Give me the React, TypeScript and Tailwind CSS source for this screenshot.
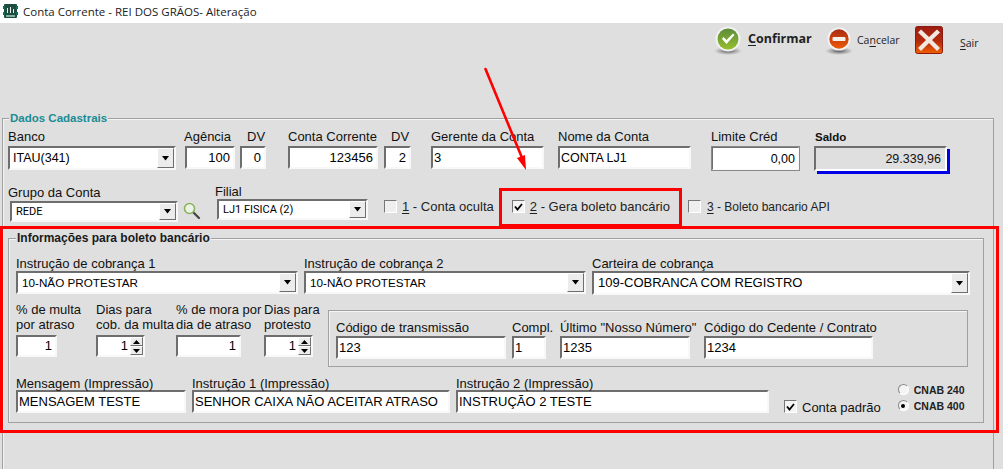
import React from "react";

const sunken = "border-2 border-t-[#6e6e6e] border-l-[#6e6e6e] border-r-[#f8f8f8] border-b-[#f8f8f8] bg-white";

function Box({ className = "", right, text, fs = "text-[13px]" }: { className?: string; right?: boolean; text: string; fs?: string }) {
  return (
    <div className={`${sunken} ${fs} flex items-center overflow-hidden whitespace-nowrap text-black ${right ? "justify-end pr-[3px]" : "pl-[1px]"} ${className}`}>
      {text}
    </div>
  );
}

function Arrow() {
  return (
    <span className="flex h-full w-[17px] shrink-0 items-center justify-center border border-t-white border-l-white border-r-[#6e6e6e] border-b-[#6e6e6e] bg-[#ececec]">
      <svg width="9" height="5" viewBox="0 0 9 5"><path d="M1 0h7L4.5 4.5z" fill="#000" /></svg>
    </span>
  );
}

function Combo({ className = "", text, fs = "text-[13px]", pad = "pl-[3px]" }: { className?: string; text: string; fs?: string; pad?: string }) {
  return (
    <div className={`${sunken} flex overflow-hidden ${className}`}>
      <span className={`flex flex-1 items-center whitespace-nowrap text-black ${fs} ${pad}`}>{text}</span>
      <Arrow />
    </div>
  );
}

function Spin({ className = "", text }: { className?: string; text: string }) {
  return (
    <div className={`${sunken} flex text-[13px] text-black ${className}`}>
      <span className="flex flex-1 items-center justify-end pr-[2px]">{text}</span>
      <span className="flex w-[13px] flex-col">
        {[0, 1].map((i) => (
          <span key={i} className="flex flex-1 items-center justify-center border border-t-white border-l-white border-r-[#6e6e6e] border-b-[#6e6e6e] bg-[#ececec]">
            <svg width="7" height="4" viewBox="0 0 7 4"><path d={i === 0 ? "M3.5 0L7 4H0z" : "M0 0h7L3.5 4z"} fill="#000" /></svg>
          </span>
        ))}
      </span>
    </div>
  );
}

function Check({ on, className = "" }: { on?: boolean; className?: string }) {
  return (
    <span className={`flex h-[13px] w-[13px] shrink-0 items-center justify-center border border-t-[#777] border-l-[#777] border-r-white border-b-white ${on ? "bg-[#f4f4f4]" : "bg-[#efefef]"} ${className}`}>
      {on && <svg width="9" height="8" viewBox="0 0 9 8"><path d="M1 3.5L3.5 6.5L8 1" fill="none" stroke="#000" strokeWidth="1.8" /></svg>}
    </span>
  );
}

function ConfirmIcon() {
  return (
    <svg width="28" height="30" viewBox="0 0 28 30">
      <defs>
        <linearGradient id="g1" x1="0" y1="0" x2="0" y2="1"><stop offset="0" stopColor="#5d8a3a" /><stop offset="1" stopColor="#96c02f" /></linearGradient>
        <radialGradient id="s1"><stop offset="0" stopColor="#555" /><stop offset="1" stopColor="#777" stopOpacity="0" /></radialGradient>
      </defs>
      <ellipse cx="14" cy="25" rx="14" ry="4" fill="url(#s1)" />
      <circle cx="14" cy="13" r="12.5" fill="#f2f2f2" />
      <circle cx="14" cy="13" r="10.5" fill="url(#g1)" />
      <path d="M8 13l4.5 5 8-9-1.5-1.5-6.5 6.5-3-3z" fill="#fff" />
    </svg>
  );
}

function CancelIcon() {
  return (
    <svg width="28" height="30" viewBox="0 0 28 30">
      <defs>
        <linearGradient id="g2" x1="0" y1="0" x2="0" y2="1"><stop offset="0" stopColor="#a82a12" /><stop offset="1" stopColor="#ef5a05" /></linearGradient>
        <radialGradient id="s2"><stop offset="0" stopColor="#555" /><stop offset="1" stopColor="#777" stopOpacity="0" /></radialGradient>
      </defs>
      <ellipse cx="14" cy="25" rx="14" ry="4" fill="url(#s2)" />
      <circle cx="14" cy="13" r="11.5" fill="#f2f2f2" />
      <circle cx="14" cy="13" r="9.7" fill="url(#g2)" />
      <rect x="7.5" y="11" width="13" height="4" rx="1" fill="#f4f0ec" />
    </svg>
  );
}

function ExitIcon() {
  return (
    <svg width="28" height="28" viewBox="0 0 28 28">
      <defs>
        <linearGradient id="g3" x1="0" y1="0" x2="0" y2="1"><stop offset="0" stopColor="#9d1d12" /><stop offset="0.55" stopColor="#b52a0c" /><stop offset="1" stopColor="#f06000" /></linearGradient>
      </defs>
      <rect x="0.5" y="0.5" width="27" height="27" rx="2" fill="url(#g3)" stroke="#8c1a10" />
      <path d="M6 3.5L14 11l8-7.5 3 3L17 14l8 8-3 3-8-8-8 8-3-3 8-8-8-7.5z" fill="#f2e8e2" />
    </svg>
  );
}

function Lens() {
  return (
    <svg width="18" height="17" viewBox="0 0 18 17" className="ml-[5px] mt-[18px] shrink-0">
      <path d="M10 10l6 6" stroke="#444" strokeWidth="2.2" strokeLinecap="round" />
      <circle cx="6.5" cy="6.5" r="5" fill="#eef3ea" stroke="#8ab45a" strokeWidth="1.6" />
    </svg>
  );
}

function Logo() {
  return (
    <svg width="15" height="15" viewBox="0 0 15 15" className="ml-[3px] shrink-0">
      <rect x="1" y="0" width="13" height="14" rx="1" fill="#1e4d3f" />
      <path d="M0 2h2v3H0zM13 2h2v3h-2zM0 8h2v3H0zM13 8h2v3h-2z" fill="#0d6e5c" />
      <path d="M4 9V4h1v5zM7 9V3h1v6zM10 9V5h1v4z" fill="#e8f0ee" />
      <rect x="3" y="11" width="9" height="2" fill="#7fb0a0" />
    </svg>
  );
}

const U = ({ children }: { children: React.ReactNode }) => <span className="underline underline-offset-2">{children}</span>;

const tiny = "font-['Roboto',sans-serif] text-[11px]";

export default function App() {
  return (
    <div className="relative flex h-[469px] w-[1003px] flex-col overflow-hidden bg-[#dfdfdf] font-['Liberation_Sans',Arial,sans-serif] text-[13px] leading-[16px] text-[#111]">
      {/* title bar */}
      <div className="flex h-[23px] shrink-0 items-center bg-white">
        <Logo />
        <span className="ml-[5px] font-['Open_Sans',sans-serif] text-[11.5px] text-[#222]">Conta Corrente - REI DOS GRÃOS- Alteração</span>
      </div>

      {/* toolbar */}
      <div className="flex h-[95px] shrink-0 items-start pt-[3px]">
        <div className="ml-[714px] flex items-center">
          <ConfirmIcon />
          <span className="ml-[6px] -mt-[4px] w-[65px] whitespace-nowrap font-['Open_Sans',sans-serif] text-[12.5px] font-bold text-[#222]"><U>C</U>onfirmar</span>
        </div>
        <div className="ml-[12px] flex items-center">
          <CancelIcon />
          <span className="ml-[4px] -mt-[3px] w-[58px] whitespace-nowrap font-['Open_Sans',sans-serif] text-[10.5px] text-[#222]">Ca<U>n</U>celar</span>
        </div>
        <ExitIcon />
        <span className="ml-[17px] mt-[9px] font-['Open_Sans',sans-serif] text-[10.5px] text-[#222]"><U>S</U>air</span>
      </div>

      {/* Dados Cadastrais */}
      <div className="relative ml-[2px] w-[992px] flex-1 border border-b-0 border-[#a0a0a0] shadow-[inset_1px_1px_0_#f4f4f4]">
        <span className="absolute -top-[8px] left-[6px] bg-[#dfdfdf] px-[1px] text-[11.5px] font-bold leading-[14px] text-[#1b8c94]">Dados Cadastrais</span>

        <div className="flex h-[55px] items-start pl-[5px] pt-[10px]">
          <div className="w-[168px]"><div className="h-[17px]">Banco</div><Combo className="h-[24px]" text="ITAU(341)" fs="text-[12.5px]" /></div>
          <div className="ml-[8px] w-[51px]"><div className="h-[17px]">Agência</div><Box className="ml-[1px] h-[23px] w-[50px]" right text="100" /></div>
          <div className="ml-[5px] w-[26px]"><div className="ml-[7px] h-[17px]">DV</div><Box className="h-[23px]" right text="0" /></div>
          <div className="ml-[22px] w-[90px]"><div className="h-[17px] whitespace-nowrap">Conta Corrente</div><Box className="h-[23px]" right text="123456" /></div>
          <div className="ml-[6px] w-[27px]"><div className="ml-[7px] h-[17px]">DV</div><Box className="h-[23px]" right text="2" /></div>
          <div className="ml-[20px] w-[113px]"><div className="h-[17px] whitespace-nowrap">Gerente da Conta</div><Box className="h-[23px]" text="3" /></div>
          <div className="ml-[14px] w-[133px]"><div className="h-[17px]">Nome da Conta</div><Box className="h-[23px]" text="CONTA LJ1" fs="text-[12.5px]" /></div>
          <div className="ml-[20px] w-[89px]"><div className="h-[17px]">Limite Créd</div><Box className="h-[25px] border-r-[#666] border-b-[#666] outline outline-1 -outline-offset-1 outline-[#8a8a8a]" right text="0,00" fs="text-[12.5px]" /></div>
          <div className="ml-[14px] w-[133px]">
            <div className="ml-[1px] h-[17px] text-[11.5px] font-bold">Saldo</div>
            <div className="flex h-[25px] items-center justify-end border-2 border-t-[#6e6e6e] border-l-[#6e6e6e] border-r-white border-b-white bg-[#dfdfdf] pr-[4px] text-[12.5px] shadow-[3px_3px_0_#0000e6]">29.339,96</div>
          </div>
        </div>

        <div className="flex h-[55px] items-start pl-[5px] pt-[10px]">
          <div className="mt-px w-[170px]"><div className="h-[16px]">Grupo da Conta</div><Combo className="ml-[2px] h-[21px] w-[168px]" text="REDE" fs={tiny} pad="pl-[4px]" /></div>
          <Lens />
          <div className="ml-[14px] w-[153px]"><div className="h-[15px]">Filial</div><Combo className="ml-[2px] h-[21px] w-[151px]" text="LJ1 FISICA (2)" fs={tiny} pad="pl-[4px]" /></div>
          <Check className="ml-[16px] mt-[16px]" />
          <span className="ml-[5px] mt-[15px] whitespace-nowrap text-[13px] text-[#222]"><U>1</U> - Conta oculta</span>
          <Check on className="ml-[18px] mt-[16px]" />
          <span className="ml-[5px] mt-[15px] whitespace-nowrap text-[13px] text-[#222]"><U>2</U> - Gera boleto bancário</span>
          <Check className="ml-[18px] mt-[16px]" />
          <span className="ml-[6px] mt-[15px] whitespace-nowrap text-[12px] text-[#222]"><U>3</U> - Boleto bancario API</span>
        </div>

        {/* Informações */}
        <div className="relative ml-[5px] mt-[9px] h-[185px] w-[976px] border border-[#a0a0a0] shadow-[inset_1px_1px_0_#f4f4f4]">
          <span className="absolute -top-[8px] left-[7px] bg-[#dfdfdf] px-[1px] text-[12px] font-bold leading-[14px] text-[#1a1a1a]">Informações para boleto bancário</span>

          <div className="flex pl-[7px] pt-[15px]">
            <div className="w-[282px]"><div className="h-[17px] pt-[2px]">Instrução de cobrança 1</div><Combo className="h-[23px]" text="10-NÃO PROTESTAR" fs="text-[11.7px]" pad="pl-[4px]" /></div>
            <div className="ml-[6px] w-[282px]"><div className="h-[17px] pt-[2px]">Instrução de cobrança 2</div><Combo className="h-[23px]" text="10-NÃO PROTESTAR" fs="text-[11.7px]" pad="pl-[4px]" /></div>
            <div className="ml-[6px] w-[378px]"><div className="h-[17px] pt-[2px]">Carteira de cobrança</div><Combo className="h-[24px]" text="109-COBRANCA COM REGISTRO" fs="text-[13px]" pad="pl-[4px]" /></div>
          </div>

          <div className="mt-[7px] flex items-start pl-[7px]">
            <div className="w-[41px]"><div className="h-[33px] w-[80px] whitespace-nowrap leading-[15px]">% de multa<br />por atraso</div><Box className="h-[22px]" right text="1" /></div>
            <div className="ml-[39px] w-[49px]"><div className="h-[33px] w-[80px] whitespace-nowrap leading-[15px]">Dias para<br />cob. da multa</div><Spin className="h-[22px]" text="1" /></div>
            <div className="ml-[31px] w-[65px]"><div className="h-[33px] w-[85px] whitespace-nowrap leading-[15px]">% de mora por<br />dia de atraso</div><Box className="h-[22px]" right text="1" /></div>
            <div className="ml-[23px] w-[49px]"><div className="h-[33px] w-[60px] whitespace-nowrap leading-[15px]">Dias para<br />protesto</div><Spin className="h-[22px]" text="1" /></div>
            <div className="ml-[15px] mt-[8px] flex h-[57px] w-[640px] border border-[#a0a0a0] pl-[7px] pt-[9px] shadow-[inset_1px_1px_0_#f4f4f4]">
              <div className="w-[170px]"><div className="h-[16px]">Código de transmissão</div><Box className="h-[23px]" text="123" /></div>
              <div className="ml-[6px] w-[34px]"><div className="h-[16px]">Compl.</div><Box className="h-[23px]" text="1" /></div>
              <div className="ml-[14px] w-[130px]"><div className="h-[16px] whitespace-nowrap">Último "Nosso Número"</div><Box className="h-[23px]" text="1235" /></div>
              <div className="ml-[14px] w-[169px]"><div className="h-[16px] whitespace-nowrap">Código do Cedente / Contrato</div><Box className="h-[23px]" text="1234" /></div>
            </div>
          </div>

          <div className="mt-[7px] flex items-start pl-[7px]">
            <div className="w-[170px]"><div className="h-[16px] pt-[2px]">Mensagem (Impressão)</div><Box className="h-[23px]" text="MENSAGEM TESTE" /></div>
            <div className="ml-[6px] w-[258px]"><div className="h-[16px] pt-[2px]">Instrução 1 (Impressão)</div><Box className="h-[23px]" text="SENHOR CAIXA NÃO ACEITAR ATRASO" /></div>
            <div className="ml-[6px] w-[313px]"><div className="h-[16px] pt-[2px]">Instrução 2 (Impressão)</div><Box className="h-[23px]" text="INSTRUÇÃO 2 TESTE" /></div>
            <Check on className="ml-[15px] mt-[26px]" />
            <span className="ml-[5px] mt-[26px] whitespace-nowrap">Conta padrão</span>
            <div className="ml-[17px] mt-[10px] flex flex-col gap-[5px]">
              {[false, true].map((on, i) => (
                <div key={i} className="flex h-[11px] items-center">
                  <span className="flex h-[11px] w-[11px] items-center justify-center rounded-full border border-t-[#888] border-l-[#888] border-r-white border-b-white bg-[#f4f4f4]">
                    {on && <span className="h-[4px] w-[4px] rounded-full bg-black" />}
                  </span>
                  <span className="ml-[5px] whitespace-nowrap text-[10.5px] font-bold text-[#222]">{on ? "CNAB 400" : "CNAB 240"}</span>
                </div>
              ))}
            </div>
          </div>
        </div>
      </div>

      {/* annotation overlays */}
      <div className="pointer-events-none absolute left-0 top-[226px] h-[207px] w-[999px] border-[3px] border-[#ff0000]" />
      <div className="pointer-events-none absolute left-[499px] top-[188px] h-[39px] w-[183px] border-[3px] border-[#ff0000]" />
      <svg className="pointer-events-none absolute left-[475px] top-[60px]" width="60" height="115" viewBox="0 0 60 115">
        <path d="M10.5 9L47.5 99" stroke="#ff0000" strokeWidth="2.6" strokeLinecap="round" />
        <path d="M51 110L42 98L50 95z" fill="#ff0000" />
      </svg>
    </div>
  );
}
